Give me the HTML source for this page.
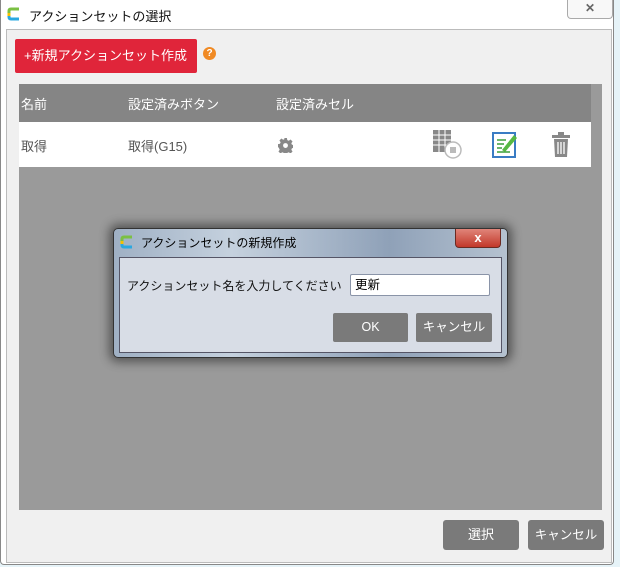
<!DOCTYPE html>
<html><head><meta charset="utf-8"><style>
*{margin:0;padding:0;box-sizing:border-box}
body{width:620px;height:567px;background:#e6f3f8;font-family:"Liberation Sans","Noto Sans CJK JP",sans-serif;position:relative;overflow:hidden;font-size:13px}
.abs{position:absolute}
</style></head><body>
<div class="abs" style="left:0;top:0;width:614px;height:565px;background:#fff;border:1px solid #888;border-top:none;border-radius:0 0 4px 4px"></div>
<svg class="abs" style="left:7px;top:7px" width="14" height="14"><path d="M12 2 H4 Q2 2 2 4 V7" fill="none" stroke="#7bc043" stroke-width="3"/><path d="M2 7 V10 Q2 12 4 12 H12" fill="none" stroke="#2aa8e0" stroke-width="3"/><rect x="0.5" y="6" width="3" height="3" fill="#f5c000"/></svg>
<div class="abs" style="left:29px;top:6px;font-size:13px;color:#111">アクションセットの選択</div>
<div class="abs" style="left:567px;top:0;width:46px;height:19px;border:1px solid #aaa;border-top:none;border-radius:0 0 4px 4px;background:#f8f8f8;text-align:center;font-size:12px;color:#666;line-height:17px;font-weight:bold">✕</div>
<div class="abs" style="left:6px;top:29px;width:606px;height:534px;background:#f0f0f0;border:1px solid #bbb"></div>
<div class="abs" style="left:15px;top:39px;width:182px;height:34px;background:#e0253a;border-radius:2px;color:#fff;font-size:13px;line-height:34px;padding-left:9px">+新規アクションセット作成</div>
<div class="abs" style="left:203px;top:47px;width:13px;height:13px;border-radius:50%;background:#f08a24;color:#fff;font-size:10px;font-weight:bold;text-align:center;line-height:13px">?</div>
<div class="abs" style="left:19px;top:84px;width:583px;height:426px;background:#9a9a9a"></div>
<div class="abs" style="left:19px;top:84px;width:572px;height:38px;background:#858585;color:#fff;font-size:13px">
<span class="abs" style="left:2px;top:10px">名前</span><span class="abs" style="left:109px;top:10px">設定済みボタン</span><span class="abs" style="left:257px;top:10px">設定済みセル</span></div>
<div class="abs" style="left:19px;top:122px;width:572px;height:45px;background:#fff;color:#555;font-size:13px">
<span class="abs" style="left:2px;top:14px">取得</span><span class="abs" style="left:109px;top:14px">取得(G15)</span>
<svg class="abs" style="left:259px;top:16px" width="15" height="15" viewBox="0 0 16 16"><path fill="#888" d="M6.5 0h3l.4 2.2 1.6.7 1.9-1.3 2.1 2.1-1.3 1.9.7 1.6 2.1.3v3l-2.1.4-.7 1.6 1.3 1.9-2.1 2.1-1.9-1.3-1.6.7-.4 2.1h-3l-.4-2.1-1.6-.7-1.9 1.3-2.1-2.1 1.3-1.9-.7-1.6L0 9.5v-3l2.1-.4.7-1.6-1.3-1.9 2.1-2.1 1.9 1.3 1.6-.7z"/><circle cx="8" cy="8" r="2.6" fill="#fff"/></svg>
<svg class="abs" style="left:414px;top:8px" width="30" height="30"><g fill="#888"><rect x="0" y="0" width="18" height="22"/></g><g stroke="#fff" stroke-width="1"><path d="M0 5H18M0 10H18M0 15H18M6 0V22M12 0V22"/></g><circle cx="20" cy="20" r="8" fill="#fff" stroke="#bbb" stroke-width="1.5"/><rect x="17" y="17" width="6" height="6" fill="#bbb"/></svg>
<svg class="abs" style="left:473px;top:8px" width="28" height="30"><rect x="1" y="3" width="22" height="24" fill="#fff" stroke="#3a7cc4" stroke-width="2"/><path d="M5 10H14M5 14H12M5 18H10M5 22H18" stroke="#3b9d3b" stroke-width="1.5"/><path d="M10 20 L22 5 L25 8 L13 22 Z" fill="#56b843"/></svg>
<svg class="abs" style="left:532px;top:10px" width="22" height="26"><rect x="1" y="3" width="18" height="3" fill="#888"/><rect x="7" y="0" width="6" height="3" fill="#888"/><path d="M3 7H17L16 25H4Z" fill="#888"/><path d="M7 10V22M10 10V22M13 10V22" stroke="#fff" stroke-width="1.3"/></svg>
</div>
<div class="abs" style="left:443px;top:520px;width:76px;height:30px;background:#7a7a7a;border-radius:3px;color:#fff;text-align:center;line-height:30px">選択</div>
<div class="abs" style="left:528px;top:520px;width:76px;height:30px;background:#7a7a7a;border-radius:3px;color:#fff;text-align:center;line-height:30px;font-size:12.5px">キャンセル</div>
<!-- dialog -->
<div class="abs" style="left:113px;top:228px;width:395px;height:130px;border-radius:5px;border:1px solid #333;background:linear-gradient(90deg,#9fb0c4,#c5d1de 30%,#8fa1b8 70%,#b5c2d0);box-shadow:0 0 10px 4px rgba(0,0,0,.45)"></div>
<svg class="abs" style="left:120px;top:235px" width="14" height="14"><path d="M12 2 H4 Q2 2 2 4 V7" fill="none" stroke="#7bc043" stroke-width="3"/><path d="M2 7 V10 Q2 12 4 12 H12" fill="none" stroke="#2aa8e0" stroke-width="3"/><rect x="0.5" y="6" width="3" height="3" fill="#f5c000"/></svg>
<div class="abs" style="left:141px;top:234px;font-size:12px;color:#000">アクションセットの新規作成</div>
<div class="abs" style="left:455px;top:229px;width:46px;height:19px;background:linear-gradient(#e0857a,#c2382a);border:1px solid #6a2a22;border-top:none;border-radius:0 0 4px 4px;color:#fff;text-align:center;font-weight:bold;line-height:17px">x</div>
<div class="abs" style="left:119px;top:257px;width:383px;height:96px;background:#d8dde6;border:1px solid #556"></div>
<div class="abs" style="left:127px;top:277px;font-size:12px;color:#111">アクションセット名を入力してください</div>
<div class="abs" style="left:350px;top:274px;width:140px;height:22px;background:#fff;border:1px solid #8a94a8;border-radius:2px;padding-left:4px;line-height:20px;color:#000;font-size:12.5px">更新</div>
<div class="abs" style="left:333px;top:313px;width:75px;height:29px;background:#7a7a7a;border-radius:2px;color:#fff;text-align:center;line-height:29px;font-size:12.5px">OK</div>
<div class="abs" style="left:416px;top:313px;width:76px;height:29px;background:#7a7a7a;border-radius:2px;color:#fff;text-align:center;line-height:29px;font-size:12.5px">キャンセル</div>
</body></html>
